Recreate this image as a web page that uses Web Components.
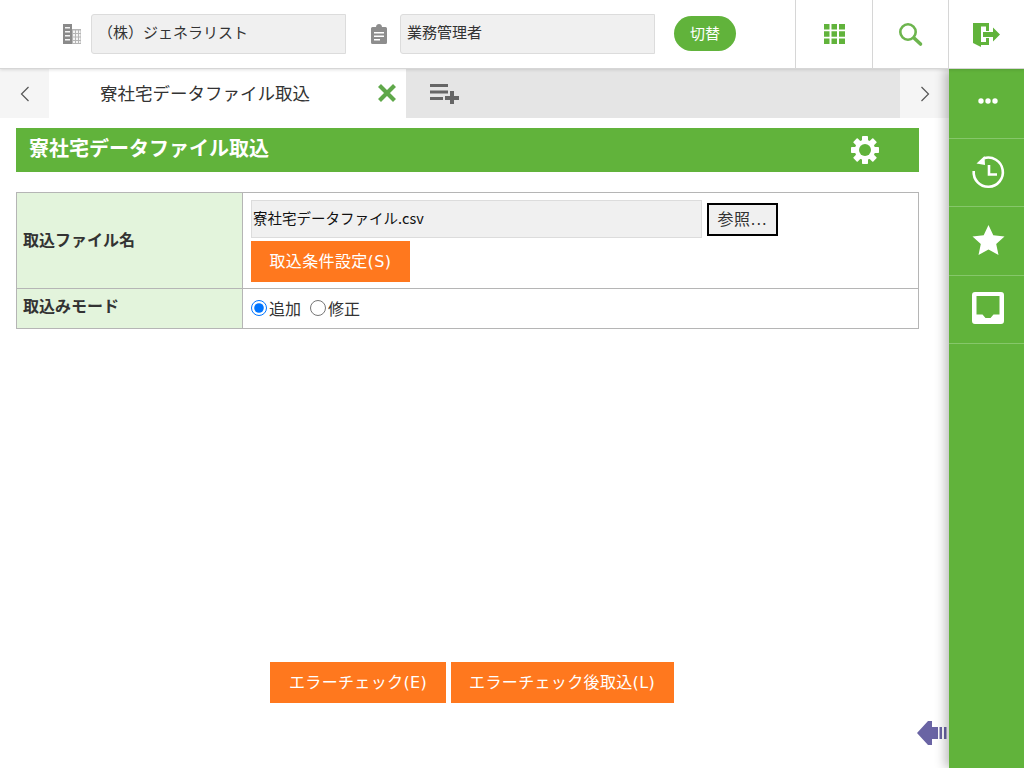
<!DOCTYPE html>
<html lang="ja">
<head>
<meta charset="utf-8">
<title>寮社宅データファイル取込</title>
<style>
  html, body { margin: 0; height: 100%; }
  body {
    font-family: "Noto Sans CJK JP", "Noto Sans", sans-serif;
    color: #333;
    background: #fff;
    overflow: hidden;
  }
</style>
</head>
<body>
<app-shell>
  <app-header slot="header"></app-header>
  <tab-bar slot="tabs" label="寮社宅データファイル取込"></tab-bar>
  <page-title slot="main">寮社宅データファイル取込</page-title>
  <import-form slot="main"></import-form>
  <form-actions slot="main">
    <orange-button>エラーチェック(E)</orange-button>
    <orange-button>エラーチェック後取込(L)</orange-button>
  </form-actions>
  <side-rail slot="rail"></side-rail>
</app-shell>

<script>
const ICONS = {
  building: [18, 20, `
    <path fill="#8a8a8a" d="M0 0h9v20H0z"/>
    <path fill="#f4f4f4" d="M2 3h5v1.500H2zM2 7h5v1.500H2zM2 11h5v1.500H2zM2 15h5v1.500H2z"/>
    <path fill="#b5b5b5" d="M9 5h9v15H9z"/>
    <path fill="#f4f4f4" d="M10 6.500h2v2.500h-2zM13 6.500h2v2.500h-2zM16 6.500h1.500v2.500H16zM10 10h2v2.500h-2zM13 10h2v2.500h-2zM16 10h1.500v2.500H16zM10 13.500h2V16h-2zM13 13.500h2V16h-2zM16 13.500h1.500V16H16zM10 17h2v2h-2zM13 17h2v2h-2zM16 17h1.500v2H16z"/>`],
  clipboard: [16, 20, `
    <path fill="#8d8d8d" fill-rule="evenodd" d="M1.500 3H5C5 1 6.500 0 8 0s3 1 3 3h3.500A1.500 1.500 0 0 1 16 4.500v14a1.500 1.500 0 0 1-1.500 1.500h-13A1.500 1.500 0 0 1 0 18.500v-14A1.500 1.500 0 0 1 1.500 3zM3 8v1.500h10V8zm0 3.500V13h10v-1.500zM3 15v1.500h6V15z"/>`],
  close: [18, 18, `
    <path fill="none" stroke="#5fa84a" stroke-width="4.200" d="M1.500 1.500l15 15M16.500 1.500l-15 15"/>`],
  addlist: [29, 20, `
    <path fill="#666" d="M0 0h18v3H0zM0 6.500h18v3H0zM0 13h13v3H0zM20 7h4v5h5v4h-5v4h-4v-4h-5v-4h5z"/>`],
  gear: [28, 28, `
    <g fill="#fff">
      <circle cx="14" cy="14" r="8" fill="none" stroke="#fff" stroke-width="4.400"/>
      <rect x="11" y="0" width="6" height="28" rx="0.800"/>
      <rect x="11" y="0" width="6" height="28" rx="0.800" transform="rotate(45 14 14)"/>
      <rect x="11" y="0" width="6" height="28" rx="0.800" transform="rotate(90 14 14)"/>
      <rect x="11" y="0" width="6" height="28" rx="0.800" transform="rotate(135 14 14)"/>
    </g>
    <circle cx="14" cy="14" r="6" fill="#61b33b"/>`],
  apps: [21, 20, `
    <path fill="#61b33b" d="M0 0h5.500v5.500H0zM7.500 0H13v5.500H7.500zM15 0h6v5.500h-6zM0 7.300h5.500v5.500H0zM7.500 7.300H13v5.500H7.500zM15 7.300h6v5.500h-6zM0 14.500h5.500V20H0zM7.500 14.500H13V20H7.500zM15 14.500h6V20h-6z"/>`],
  search: [24, 23, `
    <circle cx="9" cy="9" r="7.700" fill="none" stroke="#6db54e" stroke-width="2.600"/>
    <path fill="none" stroke="#6db54e" stroke-width="3.600" stroke-linecap="round" d="M15 15l6.500 6"/>`],
  logout: [27, 24, `
    <path fill="#61b33b" d="M0 0H16V8H13V3.500H8V19H13V15H16V22H8V24L0 20Z"/>
    <path fill="#61b33b" d="M10 9H20V4.500L27 11.500L20 18.500V14H10Z"/>`],
  dots: [20, 6, `
    <g fill="#fff"><circle cx="3" cy="3" r="2.700"/><circle cx="10" cy="3" r="2.700"/><circle cx="17" cy="3" r="2.700"/></g>`],
  history: [32, 34, `
    <path fill="none" stroke="#fff" stroke-width="2.600" d="M12 3.200A14.600 14.600 0 1 1 1.700 16"/>
    <path fill="#fff" d="M4.500 8.500L12.500 1L13 10z"/>
    <path fill="none" stroke="#fff" stroke-width="2.600" d="M17 10v9.500h8"/>`],
  star: [31, 30, `
    <path fill="#fff" d="M15.500 0l4.800 10.300 11.200 1.200-8.300 7.600 2.300 10.900-10-5.600-10 5.600 2.300-10.900L-.500 11.500l11.200-1.200z"/>`],
  inbox: [32, 32, `
    <path fill="#fff" fill-rule="evenodd" d="M3 0h26a3 3 0 0 1 3 3v26a3 3 0 0 1-3 3H3a3 3 0 0 1-3-3V3a3 3 0 0 1 3-3zM4.500 4v18.500h6l3 3.500h5l3-3.500h6V4z"/>`],
  pager: [31, 26, `
    <path fill="#6a64a4" d="M0 13L11 1h4v6h6v12h-6v6h-4z"/>
    <path fill="#6a64a4" d="M22.500 7H25v12h-2.500zM27 7h2.500v12H27z"/>`],
};

window.customElements.define(
  'ui-icon',
  class extends HTMLElement {
    connectedCallback() {
      const [w, h, body] = ICONS[this.getAttribute('name')];
      this.attachShadow({ mode: 'open' }).innerHTML = `
        <style>:host { display: block; flex: none; line-height: 0; } svg { overflow: visible; }</style>
        <svg width="${w}" height="${h}" viewBox="0 0 ${w} ${h}">${body}</svg>`;
    }
  },
);

const shellTemplate = document.createElement('template');
shellTemplate.innerHTML = `
<style>
  :host {
    display: grid;
    grid-template-columns: 1fr 75px;
    grid-template-rows: 69px 1fr;
    height: 768px;
    width: 1024px;
  }
  .top { grid-column: 1 / 3; position: relative; z-index: 3; }
  .main { display: flex; flex-direction: column; min-width: 0; }
  .rail { display: block; position: relative; z-index: 2; }
</style>
<div class="top"><slot name="header"></slot></div>
<div class="main"><slot name="tabs"></slot><slot name="main"></slot></div>
<div class="rail"><slot name="rail"></slot></div>
`;
window.customElements.define(
  'app-shell',
  class extends HTMLElement {
    constructor() {
      super();
      this.attachShadow({ mode: 'open' });
      this.shadowRoot.appendChild(shellTemplate.content.cloneNode(true));
    }
  },
);

const headerTemplate = document.createElement('template');
headerTemplate.innerHTML = `
<style>
  :host {
    display: flex;
    align-items: center;
    height: 68px;
    border-bottom: 1px solid #d6d6d6;
    background: #fff;
    box-shadow: 0 1px 3px rgba(0, 0, 0, 0.12);
    padding-left: 63px;
    font-size: 15px;
  }
  .field {
    box-sizing: border-box;
    width: 255px;
    height: 40px;
    margin-left: 10px;
    padding: 0 6px 5px;
    display: flex;
    align-items: center;
    background: #f0f0f0;
    border: 1px solid #dcdcdc;
    border-radius: 3px 0 0 3px;
  }
  .role-icon { margin-left: 25px; }
  .role { margin-left: 13px; }
  .switch {
    width: 62px;
    height: 35px;
    margin-left: 19px;
    margin-top: -1px;
    padding-bottom: 3px;
    box-sizing: border-box;
    display: flex;
    align-items: center;
    justify-content: center;
    border-radius: 18px;
    background: #61b33b;
    color: #fff;
    font-size: 15px;
  }
  .cells { margin-left: auto; display: flex; height: 100%; }
  .cell {
    box-sizing: border-box;
    height: 68px;
    display: flex;
    align-items: center;
    justify-content: center;
    border-left: 1px solid #d6d6d6;
  }
  .cell.apps { width: 77px; }
  .cell.find { width: 76px; }
  .cell.exit { width: 76px; }
  .cell.exit ui-icon { margin-top: 2px; }
</style>
<ui-icon name="building"></ui-icon>
<div class="field company">（株）ジェネラリスト</div>
<ui-icon class="role-icon" name="clipboard"></ui-icon>
<div class="field role">業務管理者</div>
<div class="switch">切替</div>
<div class="cells">
  <div class="cell apps"><ui-icon name="apps"></ui-icon></div>
  <div class="cell find"><ui-icon name="search"></ui-icon></div>
  <div class="cell exit"><ui-icon name="logout"></ui-icon></div>
</div>
`;
window.customElements.define(
  'app-header',
  class extends HTMLElement {
    constructor() {
      super();
      this.attachShadow({ mode: 'open' });
      this.shadowRoot.appendChild(headerTemplate.content.cloneNode(true));
    }
  },
);

const tabsTemplate = document.createElement('template');
tabsTemplate.innerHTML = `
<style>
  :host {
    display: flex;
    height: 49px;
    flex: none;
    font-size: 17.5px;
  }
  .arrow {
    width: 49px;
    background: #f5f5f5;
    display: flex;
    align-items: center;
    justify-content: center;
  }
  .active {
    width: 357px;
    background: #fff;
    display: flex;
    align-items: center;
    box-sizing: border-box;
    padding: 0 10px 1px 51px;
  }
  .label { flex: 1; padding-bottom: 2px; }
  .rest {
    flex: 1;
    background: #e5e5e5;
    padding: 15px 0 0 24px;
  }
</style>
<div class="arrow"><svg width="10" height="16" viewBox="0 0 10 16"><path fill="none" stroke="#555" stroke-width="1.200" d="M8.500 1L1.500 8l7 7"/></svg></div>
<div class="active"><span class="label"></span><ui-icon name="close"></ui-icon></div>
<div class="rest"><ui-icon name="addlist"></ui-icon></div>
<div class="arrow"><svg width="10" height="16" viewBox="0 0 10 16"><path fill="none" stroke="#555" stroke-width="1.200" d="M1.500 1l7 7-7 7"/></svg></div>
`;
window.customElements.define(
  'tab-bar',
  class extends HTMLElement {
    constructor() {
      super();
      this.attachShadow({ mode: 'open' });
      this.shadowRoot.appendChild(tabsTemplate.content.cloneNode(true));
      this.shadowRoot.querySelector('.label').textContent = this.getAttribute('label');
    }
  },
);

const titleTemplate = document.createElement('template');
titleTemplate.innerHTML = `
<style>
  :host {
    display: flex;
    align-items: center;
    flex: none;
    height: 44px;
    margin: 10px 30px 0 16px;
    padding: 0 40px 0 13px;
    background: #61b33b;
    color: #fff;
    font-size: 20px;
    font-weight: 700;
  }
  span { flex: 1; padding-bottom: 5px; }
</style>
<span><slot></slot></span>
<ui-icon name="gear"></ui-icon>
`;
window.customElements.define(
  'page-title',
  class extends HTMLElement {
    constructor() {
      super();
      this.attachShadow({ mode: 'open' });
      this.shadowRoot.appendChild(titleTemplate.content.cloneNode(true));
    }
  },
);

const buttonTemplate = document.createElement('template');
buttonTemplate.innerHTML = `
<style>
  :host {
    display: inline-flex;
    align-items: center;
    justify-content: center;
    box-sizing: border-box;
    height: 41px;
    padding: 0 18.500px 3px;
    background: #ff781e;
    color: #fff;
    font-family: "DejaVu Sans", "Noto Sans CJK JP", sans-serif;
    font-size: 16px;
    letter-spacing: 0.350px;
    white-space: nowrap;
  }
</style>
<slot></slot>
`;
window.customElements.define(
  'orange-button',
  class extends HTMLElement {
    constructor() {
      super();
      this.attachShadow({ mode: 'open' });
      this.shadowRoot.appendChild(buttonTemplate.content.cloneNode(true));
    }
  },
);

const formTemplate = document.createElement('template');
formTemplate.innerHTML = `
<style>
  :host {
    display: grid;
    grid-template-columns: 226px 1fr;
    flex: none;
    margin: 20px 30px 0 16px;
    border: 1px solid #b5b5b5;
    border-bottom: 0;
    font-size: 16px;
  }
  .head, .body { border-bottom: 1px solid #b5b5b5; }
  .head {
    display: flex;
    align-items: center;
    padding: 0 0 4px 6px;
    background: #e3f4dc;
    border-right: 1px solid #b5b5b5;
    font-weight: 700;
    box-sizing: border-box;
  }
  .head.low { padding-bottom: 8px; }
  .file { height: 96px; padding: 7px 8px 0; box-sizing: border-box; }
  .mode {
    height: 40px;
    box-sizing: border-box;
    padding: 0 8px 2px;
    display: flex;
    align-items: center;
  }
  .picker { display: flex; align-items: center; height: 38px; margin-bottom: 3px; }
  .path {
    box-sizing: border-box;
    width: 451px;
    height: 38px;
    padding: 0 1px 3px;
    display: flex;
    align-items: center;
    background: #f0f0f0;
    border: 1px solid #dcdcdc;
    font-size: 14.500px;
    color: #111;
  }
  .browse {
    box-sizing: border-box;
    width: 71px;
    height: 33px;
    margin-left: 5px;
    padding: 0 0 3px;
    font-family: "DejaVu Sans", "Noto Sans CJK JP", sans-serif;
    font-size: 16px;
    letter-spacing: 0.500px;
    color: #333;
    background: #f0f0f0;
    border: 2px solid #000;
    border-radius: 0;
  }
  input { width: 16px; height: 16px; margin: 0 2px 0 0; accent-color: #0075ff; }
  label { display: inline-flex; align-items: center; margin-right: 9px; line-height: 24px; }
</style>
<div class="head">取込ファイル名</div>
<div class="body file">
  <div class="picker">
    <div class="path">寮社宅データファイル.csv</div>
    <button class="browse" type="button">参照...</button>
  </div>
  <orange-button>取込条件設定(S)</orange-button>
</div>
<div class="head low">取込みモード</div>
<div class="body mode">
  <label><input type="radio" name="mode" checked>追加</label>
  <label><input type="radio" name="mode">修正</label>
</div>
`;
window.customElements.define(
  'import-form',
  class extends HTMLElement {
    constructor() {
      super();
      this.attachShadow({ mode: 'open' });
      this.shadowRoot.appendChild(formTemplate.content.cloneNode(true));
    }
  },
);

const actionsTemplate = document.createElement('template');
actionsTemplate.innerHTML = `
<style>
  :host {
    display: flex;
    justify-content: center;
    gap: 5px;
    flex: none;
    margin: auto 21px 65px 16px;
    position: relative;
  }
  .pager { position: absolute; left: 901px; top: 58px; }
</style>
<slot></slot>
<ui-icon class="pager" name="pager"></ui-icon>
`;
window.customElements.define(
  'form-actions',
  class extends HTMLElement {
    constructor() {
      super();
      this.attachShadow({ mode: 'open' });
      this.shadowRoot.appendChild(actionsTemplate.content.cloneNode(true));
    }
  },
);

const railTemplate = document.createElement('template');
railTemplate.innerHTML = `
<style>
  :host {
    display: block;
    box-sizing: border-box;
    height: 100%;
    padding-top: 1px;
    background: #61b33b;
    box-shadow: -4px 0 10px rgba(0, 0, 0, 0.25);
  }
  .item {
    box-sizing: border-box;
    height: 68.500px;
    display: flex;
    align-items: center;
    justify-content: center;
    border-bottom: 1px solid #86c76a;
    padding: 0 0 2px 3px;
  }
  .dots { margin-bottom: 4px; }
  .history { margin-top: 2px; }
</style>
<div class="item"><ui-icon class="dots" name="dots"></ui-icon></div>
<div class="item"><ui-icon class="history" name="history"></ui-icon></div>
<div class="item"><ui-icon name="star"></ui-icon></div>
<div class="item"><ui-icon name="inbox"></ui-icon></div>
`;
window.customElements.define(
  'side-rail',
  class extends HTMLElement {
    constructor() {
      super();
      this.attachShadow({ mode: 'open' });
      this.shadowRoot.appendChild(railTemplate.content.cloneNode(true));
    }
  },
);
</script>
</body>
</html>
